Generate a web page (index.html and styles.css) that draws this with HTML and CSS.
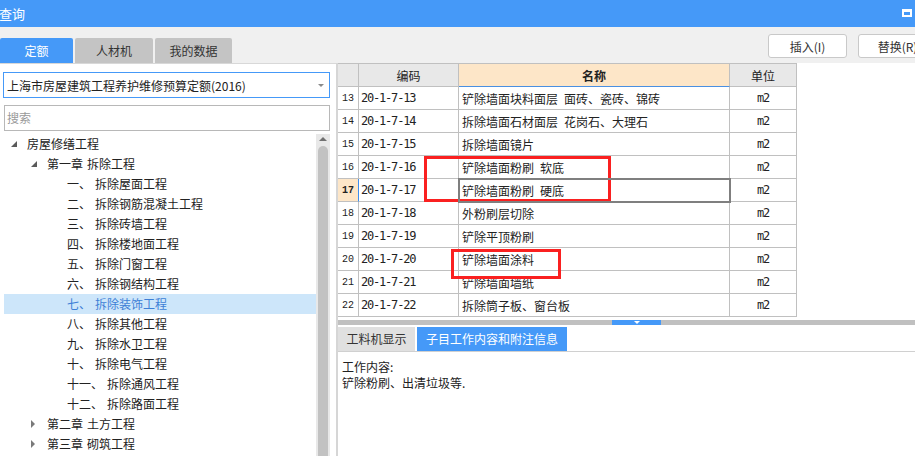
FILE: index.html
```html
<!DOCTYPE html>
<html lang="zh-CN">
<head>
<meta charset="utf-8">
<title>查询</title>
<link rel="stylesheet" href="styles.css">
</head>
<body>
<div class="app">
  <header class="titlebar">
    <span class="title">查询</span>
    <span class="winbtn"></span>
  </header>
  <div class="toolbar">
    <nav class="tabs">
      <span class="tab t1 active">定额</span>
      <span class="tab t2">人材机</span>
      <span class="tab t3">我的数据</span>
    </nav>
    <div class="actions">
      <button class="btn">插入(I)</button>
      <button class="btn">替换(R)</button>
    </div>
  </div>
  <div class="main">
    <aside class="left">
      <div class="select"><span>上海市房屋建筑工程养护维修预算定额(2016)</span><span class="caret"></span></div>
      <div class="search">搜索</div>
      <div class="treewrap">
        <ul class="tree">
          <li class="l0"><span class="tg open"></span>房屋修缮工程</li>
          <li class="l1"><span class="tg open"></span>第一章<span class="sp">拆除工程</span></li>
          <li class="l2"><span>一、</span><span class="nm">拆除屋面工程</span></li>
          <li class="l2"><span>二、</span><span class="nm">拆除钢筋混凝土工程</span></li>
          <li class="l2"><span>三、</span><span class="nm">拆除砖墙工程</span></li>
          <li class="l2"><span>四、</span><span class="nm">拆除楼地面工程</span></li>
          <li class="l2"><span>五、</span><span class="nm">拆除门窗工程</span></li>
          <li class="l2"><span>六、</span><span class="nm">拆除钢结构工程</span></li>
          <li class="l2 selected"><span>七、</span><span class="nm">拆除装饰工程</span></li>
          <li class="l2"><span>八、</span><span class="nm">拆除其他工程</span></li>
          <li class="l2"><span>九、</span><span class="nm">拆除水卫工程</span></li>
          <li class="l2"><span>十、</span><span class="nm">拆除电气工程</span></li>
          <li class="l2"><span>十一、</span><span class="nm">拆除通风工程</span></li>
          <li class="l2"><span>十二、</span><span class="nm">拆除路面工程</span></li>
          <li class="l1"><span class="tg closed"></span>第二章<span class="sp">土方工程</span></li>
          <li class="l1"><span class="tg closed"></span>第三章<span class="sp">砌筑工程</span></li>
        </ul>
        <div class="vscroll"><span class="up"></span><span class="thumb"></span></div>
      </div>
    </aside>
    <section class="right">
      <div class="grid">
        <div class="c hd"></div><div class="c hd">编码</div><div class="c hd name-hd">名称</div><div class="c hd">单位</div>

        <div class="c rn">13</div><div class="c code">20-1-7-13</div><div class="c nmc">铲除墙面块料面层&ensp;面砖、瓷砖、锦砖</div><div class="c unit">m2</div>
        <div class="c rn">14</div><div class="c code">20-1-7-14</div><div class="c nmc">拆除墙面石材面层&ensp;花岗石、大理石</div><div class="c unit">m2</div>
        <div class="c rn">15</div><div class="c code">20-1-7-15</div><div class="c nmc">拆除墙面镜片</div><div class="c unit">m2</div>
        <div class="c rn">16</div><div class="c code">20-1-7-16</div><div class="c nmc">铲除墙面粉刷&ensp;软底</div><div class="c unit">m2</div>
        <div class="c rn cur">17</div><div class="c code">20-1-7-17</div><div class="c nmc sel">铲除墙面粉刷&ensp;硬底</div><div class="c unit">m2</div>
        <div class="c rn">18</div><div class="c code">20-1-7-18</div><div class="c nmc">外粉刷层切除</div><div class="c unit">m2</div>
        <div class="c rn">19</div><div class="c code">20-1-7-19</div><div class="c nmc">铲除平顶粉刷</div><div class="c unit">m2</div>
        <div class="c rn">20</div><div class="c code">20-1-7-20</div><div class="c nmc">铲除墙面涂料</div><div class="c unit">m2</div>
        <div class="c rn">21</div><div class="c code">20-1-7-21</div><div class="c nmc">铲除墙面墙纸</div><div class="c unit">m2</div>
        <div class="c rn">22</div><div class="c code">20-1-7-22</div><div class="c nmc">拆除筒子板、窗台板</div><div class="c unit">m2</div>
      </div>
      <div class="splitter"><span class="handle"></span></div>
      <div class="subtabs">
        <span class="stab s1">工料机显示</span>
        <span class="stab s2 active">子目工作内容和附注信息</span>
      </div>
      <div class="content">
        <p>工作内容:</p>
        <p>铲除粉刷、出清垃圾等.</p>
      </div>
    </section>
  </div>
  <div class="mark m1"></div>
  <div class="mark m2"></div>
</div>
</body>
</html>
```

FILE: styles.css
```css
* { box-sizing: border-box; margin: 0; padding: 0; }
html, body { width: 915px; height: 456px; overflow: hidden; background: #fff; }
body {
  font-family: "Noto Sans CJK SC", "Microsoft YaHei", sans-serif;
  font-size: 12px;
  color: #222;
}
.app { position: relative; width: 915px; height: 456px; overflow: hidden; }

/* title bar */
.titlebar {
  height: 27px;
  background: #4599f8;
  color: #fff;
  display: flex;
  align-items: center;
  justify-content: space-between;
}
.title { font-size: 13px; line-height: 27px; margin-left: -1px; }
.winbtn {
  width: 10px;
  height: 8px;
  border: 2px solid #fff;
  border-top-width: 3px;
  margin-right: 3px;
  margin-top: -1px;
}

/* toolbar */
.toolbar {
  height: 36px;
  background: #f0f0f0;
  display: flex;
  justify-content: space-between;
  overflow: hidden;
}
.tabs { display: flex; gap: 2px; align-self: flex-end; }
.tab {
  height: 25px;
  line-height: 25px;
  text-align: center;
  background: #c4c4c4;
  color: #333;
  border-radius: 2px 2px 0 0;
}
.tab.t1 { width: 73px; }
.tab.t2 { width: 78px; }
.tab.t3 { width: 77px; }
.tab.active { background: #4599f8; color: #fff; }
.actions { display: flex; gap: 11px; margin-top: 7px; margin-right: -22px; align-self: flex-start; }
.btn {
  width: 79px;
  height: 24px;
  border: 1px solid #c9c9c9;
  border-radius: 3px;
  background: #fff;
  font: inherit;
  color: #333;
}

/* main */
.main { display: flex; height: 393px; }
.left {
  width: 336px;
  flex: none;
  border-top: 1px solid #d8d8d8;
  padding: 8px 6px 0 4px;
  display: flex;
  flex-direction: column;
}
.select {
  height: 26px;
  margin-left: -1px;
  border: 1px solid #4599f8;
  display: flex;
  align-items: center;
  padding-left: 3px;
  white-space: nowrap;
}
.caret {
  margin-left: auto;
  margin-right: 5px;
  width: 0;
  height: 0;
  border-left: 3px solid transparent;
  border-right: 3px solid transparent;
  border-top: 3px solid #8a8a8a;
}
.search {
  margin-top: 7px;
  height: 26px;
  border: 1px solid #b8b8b8;
  padding-left: 2px;
  line-height: 24px;
  color: #9a9a9a;
}
.treewrap { margin-top: 3px; flex: 1; display: flex; min-height: 0; }
.tree { list-style: none; width: 312px; flex: none; }
.tree li {
  height: 20px;
  line-height: 20px;
  display: flex;
  align-items: center;
  white-space: nowrap;
}
.tree .l0 { padding-left: 7px; }
.tree .l1 { padding-left: 27px; }
.tree .l2 { padding-left: 63px; }
.tg { width: 16px; flex: none; display: flex; align-items: center; }
.tg.open::before {
  content: "";
  width: 0;
  height: 0;
  border-left: 6px solid transparent;
  border-bottom: 6px solid #5a5a5a;
}
.tg.closed::before {
  content: "";
  width: 0;
  height: 0;
  border-top: 4px solid transparent;
  border-bottom: 4px solid transparent;
  border-left: 4px solid #7a7a7a;
}
.sp { margin-left: 4px; }
.nm { margin-left: 4px; }
.tree li.selected { background: #cde6fa; color: #3d7fd6; }

.vscroll {
  width: 14px;
  flex: none;
  background: #e8e8e8;
  display: flex;
  flex-direction: column;
  align-items: center;
}
.up {
  margin-top: 3px;
  width: 0;
  height: 0;
  border-left: 4px solid transparent;
  border-right: 4px solid transparent;
  border-bottom: 4px solid #707070;
}
.thumb {
  margin-top: 5px;
  width: 10px;
  flex: 1;
  background: #c2c2c2;
  border-radius: 5px 5px 0 0;
}

/* right */
.right {
  flex: 1;
  border-left: 2px solid #d6d6d6;
  display: flex;
  flex-direction: column;
}
.grid {
  display: grid;
  grid-template-columns: 21px 100px 271px 67px;
  grid-auto-rows: 23px;
  width: 459px;
  border-top: 1px solid #c0c0c0;
}
.c {
  border-right: 1px solid #c0c0c0;
  border-bottom: 1px solid #c0c0c0;
  display: flex;
  align-items: center;
  overflow: hidden;
  white-space: nowrap;
}
.hd { background: #e8e8e8; justify-content: center; color: #222; }
.hd.name-hd { background: #fde6c8; font-weight: bold; border-bottom-color: #4a90e2; }
.rn {
  justify-content: center;
  font-family: "Liberation Mono", monospace;
  font-size: 10px;
}
.rn.cur { background: #fde6c8; font-weight: bold; border-right-color: #3d8ef0; }
.code {
  padding-left: 2px;
  font-family: "DejaVu Sans Mono", monospace;
  font-size: 12px;
  letter-spacing: -1.2px;
}
.nmc { padding-left: 3px; }
.nmc.sel {
  position: relative;
  outline: 2px solid #7f7f7f;
  outline-offset: -1px;
  z-index: 1;
}
.unit {
  justify-content: center;
  font-family: "DejaVu Sans Mono", monospace;
  font-size: 12px;
  letter-spacing: -1.2px;
}

.splitter {
  margin-top: 3px;
  height: 5px;
  background: #c0c0c0;
  display: flex;
}
.handle {
  margin-left: 274px;
  width: 49px;
  height: 5px;
  background: #4599f8;
  display: flex;
  justify-content: center;
  align-items: flex-start;
}
.handle::before {
  content: "";
  margin-top: 1px;
  width: 0;
  height: 0;
  border-left: 3px solid transparent;
  border-right: 3px solid transparent;
  border-top: 3px solid #fff;
}
.subtabs {
  margin-top: 2px;
  display: flex;
  gap: 2px;
  border-bottom: 1px solid #d0d0d0;
}
.stab {
  height: 24px;
  line-height: 24px;
  text-align: center;
  background: #e0e0e0;
  color: #333;
}
.stab.s1 { width: 77px; }
.stab.s2 { width: 150px; }
.stab.active { background: #4599f8; color: #fff; }
.content { padding: 7px 4px; line-height: 16px; color: #222; }

/* annotation marks drawn over the screenshot */
.mark { position: absolute; border: 3px solid #fa2020; pointer-events: none; }
.m1 { left: 424px; top: 156px; width: 187px; height: 46px; }
.m2 { left: 451px; top: 249px; width: 110px; height: 30px; }
```
